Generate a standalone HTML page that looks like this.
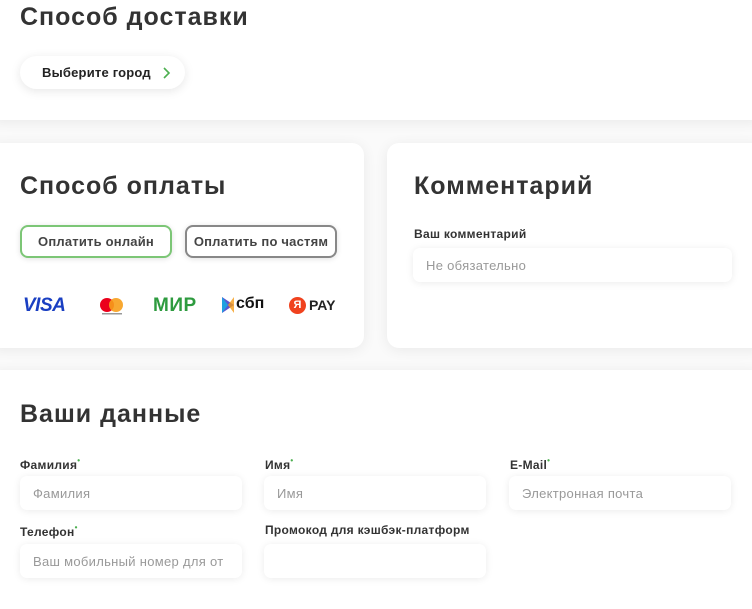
<!DOCTYPE html>
<html><head><meta charset="utf-8"><style>
*{box-sizing:border-box;margin:0;padding:0}
html,body{width:752px;height:609px;overflow:hidden}
body{background:#fafafa;font-family:"Liberation Sans",sans-serif;color:#333;position:relative}
.card{position:absolute;background:#fff;border-radius:12px;box-shadow:0 2px 14px rgba(0,0,0,.07)}
h2{position:absolute;font-size:25px;font-weight:bold;color:#333;letter-spacing:1px;white-space:nowrap}
.lbl{position:absolute;font-size:12px;font-weight:bold;color:#333;letter-spacing:.3px;white-space:nowrap}
.lbl sup{color:#4caf50;font-size:8px;vertical-align:6px}
.inp{position:absolute;height:34px;background:#fff;border-radius:7px;box-shadow:0 1px 8px rgba(0,0,0,.08);font-size:13px;letter-spacing:.3px;color:#999;padding:10px 13px;white-space:nowrap;overflow:hidden}
.btn{position:absolute;height:33px;border-radius:8px;background:#fff;font-size:13px;font-weight:bold;color:#444;text-align:center;line-height:30px;box-shadow:0 1px 6px rgba(0,0,0,.12);letter-spacing:.2px;white-space:nowrap}
</style></head><body>
<div class="card" style="left:-12px;top:-20px;width:776px;height:140px;border-radius:0 0 12px 12px"></div>
<h2 style="left:20px;top:3px">Способ доставки</h2>
<div class="btn" style="left:20px;top:56px;width:165px;height:33px;border-radius:17px;line-height:33px;color:#222;font-size:13px;text-align:left;padding-left:22px;box-shadow:0 2px 10px rgba(0,0,0,.1)">Выберите город <svg width="9" height="12" viewBox="0 0 9 12" style="position:absolute;left:142px;top:11px"><path d="M2 1l5 5-5 5" fill="none" stroke="#4caf50" stroke-width="1.6"/></svg></div>

<div class="card" style="left:-12px;top:143px;width:376px;height:205px"></div>
<h2 style="left:20px;top:172px">Способ оплаты</h2>
<div class="btn" style="left:20px;top:225px;width:152px;border:2px solid #7cc676">Оплатить онлайн</div>
<div class="btn" style="left:185px;top:225px;width:152px;border:2px solid #888">Оплатить по частям</div>
<div style="position:absolute;left:23px;top:295px;font-size:19px;font-weight:bold;font-style:italic;color:#1a3fc2;letter-spacing:-.5px">VISA</div>
<svg style="position:absolute;left:99px;top:296px" width="26" height="20"><circle cx="8" cy="9" r="7" fill="#eb001b"/><circle cx="17" cy="9" r="7" fill="#f79e1b" opacity=".9"/><rect x="3" y="17" width="20" height="1.5" fill="#999"/></svg>
<div style="position:absolute;left:153px;top:295px;font-size:19px;font-weight:bold;color:#2e9b3f;letter-spacing:.5px">МИР</div>
<svg style="position:absolute;left:221px;top:295px" width="14" height="20"><path d="M1 2l12 8-12 8z" fill="#5b57d1"/><path d="M1 2l6 8-6 8" fill="#1fa0e0"/><path d="M7 10l6-8v16z" fill="#f59c1a" opacity=".8"/></svg>
<div style="position:absolute;left:236px;top:295px;font-size:16px;font-weight:bold;color:#111">сбп</div>
<div style="position:absolute;left:289px;top:297px;width:17px;height:17px;border-radius:50%;background:#f0421e;color:#fff;font-size:11px;font-weight:bold;text-align:center;line-height:17px">Я</div>
<div style="position:absolute;left:309px;top:297px;font-size:14px;font-weight:bold;color:#222">PAY</div>

<div class="card" style="left:387px;top:143px;width:380px;height:205px"></div>
<h2 style="left:414px;top:172px">Комментарий</h2>
<div class="lbl" style="left:414px;top:227px">Ваш комментарий</div>
<div class="inp" style="left:413px;top:248px;width:319px">Не обязательно</div>

<div class="card" style="left:-12px;top:370px;width:776px;height:260px"></div>
<h2 style="left:20px;top:400px">Ваши данные</h2>
<div class="lbl" style="left:20px;top:456px">Фамилия<sup>•</sup></div>
<div class="lbl" style="left:265px;top:456px">Имя<sup>•</sup></div>
<div class="lbl" style="left:510px;top:456px">E-Mail<sup>•</sup></div>
<div class="inp" style="left:20px;top:476px;width:222px">Фамилия</div>
<div class="inp" style="left:264px;top:476px;width:222px">Имя</div>
<div class="inp" style="left:509px;top:476px;width:222px">Электронная почта</div>
<div class="lbl" style="left:20px;top:523px">Телефон<sup>•</sup></div>
<div class="lbl" style="left:265px;top:523px">Промокод для кэшбэк-платформ</div>
<div class="inp" style="left:20px;top:544px;width:222px">Ваш мобильный номер для от</div>
<div class="inp" style="left:264px;top:544px;width:222px"></div>
</body></html>
